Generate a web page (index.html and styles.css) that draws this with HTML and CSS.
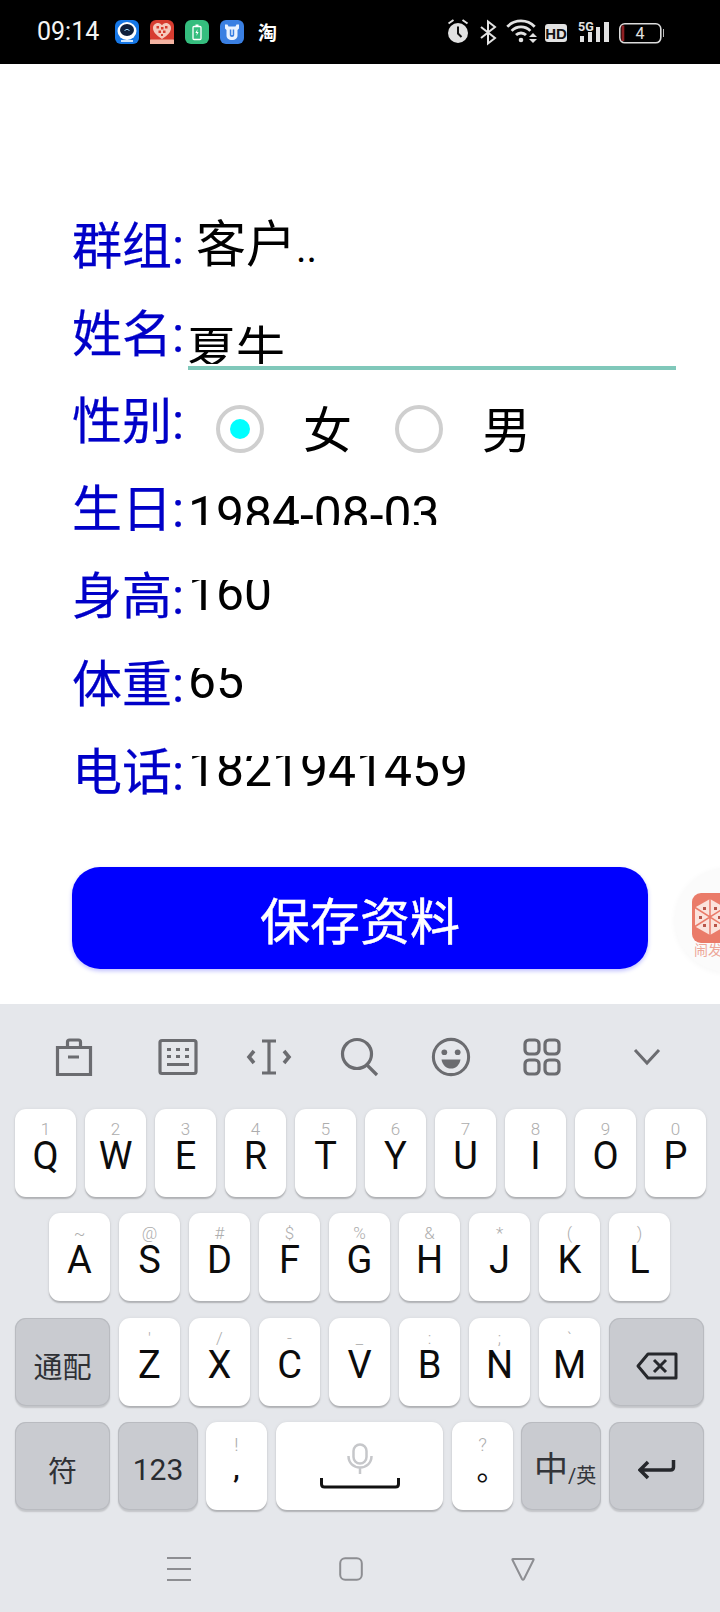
FILE: index.html
```html
<!DOCTYPE html>
<html lang="zh-CN">
<head>
<meta charset="utf-8">
<title>资料</title>
<link rel="stylesheet" href="styles.css">
</head>
<body>
<header class="status">
  <span class="time">09:14</span>
  <div class="apps">
    <svg class="app" viewBox="0 0 24 24"><rect width="24" height="24" rx="6" fill="#1677e6"/><ellipse cx="12" cy="11" rx="9.500" ry="9" fill="#fff"/><ellipse cx="12" cy="10" rx="7" ry="6" fill="#10203c"/><path d="M9.500 10.500q2.500-2.500 5 0" fill="none" stroke="#9fdcff" stroke-width="1"/><path d="M6 21h12" stroke="#cfe6ff" stroke-width="2"/></svg>
    <svg class="app" viewBox="0 0 24 24"><rect width="24" height="24" rx="6" fill="#d73c30"/><path d="M12 19C6 15 3 12 3 8 3 4.500 6 3 8 3c2 0 3.200 1 4 2.300C12.800 4 14 3 16 3c2 0 5 1.500 5 5 0 4-3 7-9 11z" fill="#f5c9bd"/><path d="M6.500 6h2.500v2.500H6.500zM11 7h2.500v2.500H11zM15 6h2.500v2.500H15zM8.500 10.500h2.500V13H8.500zM13 10.500h2.500V13H13zM11 14h2v2h-2z" fill="#d73c30"/><rect y="19.500" width="24" height="4.500" fill="#f4b3a2"/></svg>
    <svg class="app" viewBox="0 0 24 24"><rect width="24" height="24" rx="6" fill="#35bd7e"/><rect x="8" y="6.500" width="8" height="13" rx="1" fill="none" stroke="#fff" stroke-width="1.300"/><rect x="10.500" y="4.500" width="3" height="2" fill="#fff"/><path d="M12.600 9l-2.200 4h1.500l-.5 3 2.200-4h-1.500z" fill="#fff"/></svg>
    <svg class="app" viewBox="0 0 24 24"><rect width="24" height="24" rx="6" fill="#3a7fe2"/><path d="M5 4.500h2.500l1 2h7l1-2H19v4l-1.500 1.500v5.500c0 2.500-2 4.500-5.500 4.500s-5.500-2-5.500-4.500V10L5 8.500z" fill="#eaf2ff"/><path d="M9.800 9.500h1.500V15h1.400V9.500h1.500V15c0 1.200-.9 2-2.200 2s-2.200-.8-2.200-2z" fill="#3a7fe2"/></svg>
  </div>
  <span class="tao">淘</span>
  <svg class="sys" viewBox="0 0 216 30">
    <circle cx="10" cy="16" r="10" fill="#e2e2e2"/>
    <path d="M10 9.500v7l3.500 3.500" fill="none" stroke="#111" stroke-width="2"/>
    <path d="M0.500 6.500l5-3.500M19.500 6.500l-5-3.500" stroke="#e2e2e2" stroke-width="2"/>
    <path d="M33 10l14 11-7 5.500V4.500l7 5.500-14 11" fill="none" stroke="#e2e2e2" stroke-width="2"/>
    <path d="M68 18.100a7 7 0 0 1 10 0M63.600 13.900a13 13 0 0 1 18.800 0M59.300 9.700a19 19 0 0 1 27.400 0" fill="none" stroke="#e2e2e2" stroke-width="2.800"/>
    <circle cx="73" cy="23" r="2.300" fill="#e2e2e2"/>
    <path d="M81 20l4-4 4 4zM81 22l4 4 4-4z" fill="#e2e2e2"/>
    <rect x="97" y="7" width="22" height="18" rx="3" fill="#e2e2e2"/>
    <text x="108" y="21.500" class="sys-hd" text-anchor="middle">HD</text>
    <text x="130" y="13.500" class="sys-5g">5G</text>
    <path d="M132 19h4v6h-4zM140 15h4v10h-4zM148 10h4v15h-4zM156 5h5v20h-5z" fill="#e2e2e2"/>
    <rect x="171.800" y="6.800" width="41" height="19" rx="5" fill="none" stroke="#dcdcdc" stroke-width="1.600"/>
    <rect x="215" y="12" width="1.500" height="8" fill="#bbb"/>
    <rect x="173.500" y="8.500" width="2.800" height="15.500" fill="#8e1f22"/>
    <text x="192" y="21.500" class="sys-4" text-anchor="middle">4</text>
  </svg>
</header>

<main class="page">
  <form class="form">
    <div class="row">
      <span class="label">群组:</span>
      <span class="spinner">客户<span class="dots">..</span></span>
    </div>
    <div class="row">
      <span class="label">姓名:</span>
      <div class="field"><div class="field-clip">夏牛</div></div>
    </div>
    <div class="row">
      <span class="label">性别:</span>
      <div class="radios">
        <span class="radio radio-on"></span><span class="opt">女</span>
        <span class="radio radio-two"></span><span class="opt">男</span>
      </div>
    </div>
    <div class="row">
      <span class="label">生日:</span>
      <div class="num num-date">1984-08-03</div>
    </div>
    <div class="row">
      <span class="label">身高:</span>
      <div class="num num-height">160</div>
    </div>
    <div class="row">
      <span class="label">体重:</span>
      <div class="num num-weight">65</div>
    </div>
    <div class="row">
      <span class="label">电话:</span>
      <div class="num num-phone">1821941459</div>
    </div>
    <button class="save" type="button">保存资料</button>
  </form>
  <aside class="bubble">
    <svg class="bubble-icon" viewBox="0 0 36 50">
      <rect width="44" height="50" rx="9" fill="#ea7b69"/>
      <path d="M18 6l15 8.500v19L18 42 3 33.500v-19z" fill="#fbe3dc"/>
      <path d="M18 6v36M3 14.500l30 19M33 14.500l-30 19" stroke="#ea7b69" stroke-width="1.500"/>
      <path d="M11 14h3v3h-3zM22 14h3v3h-3zM7 23h3v3H7zM26 23h3v3h-3zM11 31h3v3h-3zM22 31h3v3h-3z" fill="#b9564a"/>
    </svg>
    <span class="bubble-text">闹发</span>
  </aside>
</main>

<section class="kb">
  <div class="tools">
    <svg class="tool tool-first" viewBox="0 0 40 40"><path d="M3.500 10.500h33v27h-33zM13.500 10.500V5q0-2 2-2h9q2 0 2 2v5.500M14 20h11" fill="none" stroke="#6b6c70" stroke-width="3.200"/></svg>
    <svg class="tool" viewBox="0 0 40 40"><rect x="2" y="3.500" width="36" height="33" rx="2" fill="none" stroke="#6b6c70" stroke-width="3.200"/><path d="M9 11h4v3H9zM18 11h4v3h-4zM27 11h4v3h-4zM9 18h4v3H9zM18 18h4v3h-4zM27 18h4v3h-4zM9 26h22v3H9z" fill="#6b6c70"/></svg>
    <svg class="tool tool-over" viewBox="0 0 40 40"><path d="M13 4h14M13 36h14M20 4v32" fill="none" stroke="#6b6c70" stroke-width="3.200"/><path d="M5 14L0 20l5 6M35 14l5 6-5 6" fill="none" stroke="#6b6c70" stroke-width="3.600"/></svg>
    <svg class="tool" viewBox="0 0 40 40"><circle cx="17" cy="17" r="14.500" fill="none" stroke="#6b6c70" stroke-width="3.200"/><path d="M27 28l10 10" stroke="#6b6c70" stroke-width="3.200"/></svg>
    <svg class="tool" viewBox="0 0 42 42"><circle cx="21" cy="21" r="18.500" fill="none" stroke="#6b6c70" stroke-width="3.200"/><circle cx="14" cy="16" r="3" fill="#6b6c70"/><circle cx="28" cy="16" r="3" fill="#6b6c70"/><path d="M11 23.500h20c-1 6-5 9.500-10 9.500s-9-3.500-10-9.500z" fill="#6b6c70"/></svg>
    <svg class="tool" viewBox="0 0 40 40"><g fill="none" stroke="#6b6c70" stroke-width="3.200"><rect x="3" y="3" width="14" height="14" rx="4"/><rect x="23" y="3" width="14" height="14" rx="4"/><rect x="3" y="23" width="14" height="14" rx="4"/><rect x="23" y="23" width="14" height="14" rx="4"/></g></svg>
    <svg class="tool tool-last" viewBox="0 0 40 40"><path d="M8 13l12 13 12-13" fill="none" stroke="#6b6c70" stroke-width="3"/></svg>
  </div>

  <div class="keys">
    <div class="krow krow-top">
      <div class="key"><small>1</small><b>Q</b></div>
      <div class="key"><small>2</small><b>W</b></div>
      <div class="key"><small>3</small><b>E</b></div>
      <div class="key"><small>4</small><b>R</b></div>
      <div class="key"><small>5</small><b>T</b></div>
      <div class="key"><small>6</small><b>Y</b></div>
      <div class="key"><small>7</small><b>U</b></div>
      <div class="key"><small>8</small><b>I</b></div>
      <div class="key"><small>9</small><b>O</b></div>
      <div class="key"><small>0</small><b>P</b></div>
    </div>
    <div class="krow krow-mid">
      <div class="key"><small>~</small><b>A</b></div>
      <div class="key"><small>@</small><b>S</b></div>
      <div class="key"><small>#</small><b>D</b></div>
      <div class="key"><small>$</small><b>F</b></div>
      <div class="key"><small>%</small><b>G</b></div>
      <div class="key"><small>&amp;</small><b>H</b></div>
      <div class="key"><small>*</small><b>J</b></div>
      <div class="key"><small>(</small><b>K</b></div>
      <div class="key"><small>)</small><b>L</b></div>
    </div>
    <div class="krow krow-top">
      <div class="key func func-text">通配</div>
      <div class="key"><small>'</small><b>Z</b></div>
      <div class="key"><small>/</small><b>X</b></div>
      <div class="key"><small>-</small><b>C</b></div>
      <div class="key"><small>_</small><b>V</b></div>
      <div class="key"><small>:</small><b>B</b></div>
      <div class="key"><small>;</small><b>N</b></div>
      <div class="key"><small>`</small><b>M</b></div>
      <div class="key func"><svg class="del" viewBox="0 0 42 28"><path d="M12 2h28v24H12L2 14z" fill="none" stroke="#26282c" stroke-width="3" stroke-linejoin="round"/><path d="M18 8l12 12M30 8L18 20" stroke="#26282c" stroke-width="3"/></svg></div>
    </div>
    <div class="krow krow-bottom">
      <div class="key func func-text">符</div>
      <div class="key func func-num">123</div>
      <div class="key"><small class="punct">!</small><b class="comma">,</b></div>
      <div class="key key-space">
        <svg class="space-icon" viewBox="0 0 80 46"><rect x="33.500" y="1.500" width="13" height="19" rx="6.500" fill="none" stroke="#c6c7ca" stroke-width="2.500"/><path d="M28.500 13c0 7 5 11.500 11.500 11.500S51.500 20 51.500 13M40 24.500V31" fill="none" stroke="#c6c7ca" stroke-width="2.500"/><path d="M1.500 35v6q0 3 3 3h71q3 0 3-3v-6" fill="none" stroke="#111" stroke-width="3"/></svg>
      </div>
      <div class="key key-period"><small class="punct">?</small><b class="period">。</b></div>
      <div class="key func func-lang"><span class="zh">中</span><span class="en">/英</span></div>
      <div class="key func key-enter"><svg class="enter" viewBox="0 0 38 22"><path d="M35.500 1v7q0 3-3 3H3M10 3l-8 8 8 8" fill="none" stroke="#26282c" stroke-width="3.500"/></svg></div>
    </div>
  </div>

  <nav class="nav">
    <svg class="nav-icon" viewBox="0 0 24 24"><path d="M0 1h24M0 12h24M0 23h24" stroke="#8d8e92" stroke-width="2"/></svg>
    <svg class="nav-icon" viewBox="0 0 24 24"><rect x="1.200" y="1.200" width="21.600" height="21.600" rx="5" fill="none" stroke="#8d8e92" stroke-width="2"/></svg>
    <svg class="nav-icon" viewBox="0 0 24 24"><path d="M2 2h20q1 0 .5 1L13 22q-1 1.500-2 0L1.500 3Q1 2 2 2z" fill="none" stroke="#8d8e92" stroke-width="2"/></svg>
  </nav>
</section>
</body>
</html>
```

FILE: styles.css
```css
* { box-sizing: border-box; }

html, body {
  margin: 0;
  padding: 0;
}

body {
  width: 720px;
  height: 1612px;
  overflow: hidden;
  background: #fff;
  font-family: Roboto, "Noto Sans CJK SC", sans-serif;
}

/* status bar */
.status {
  height: 64px;
  background: #000;
  display: flex;
  align-items: center;
  padding-left: 37px;
  color: #fff;
}
.time {
  width: 62px;
  font-size: 25px;
  line-height: 28px;
  color: #f4f4f4;
}
.apps {
  display: flex;
  gap: 11px;
  margin-left: 16px;
}
.app {
  display: block;
  width: 24px;
  height: 24px;
}
.tao {
  margin-left: 14px;
  width: 20px;
  font-size: 19px;
  line-height: 22px;
  font-weight: 700;
  font-family: "Noto Sans CJK SC", sans-serif;
}
.sys {
  display: block;
  width: 216px;
  height: 30px;
  margin-left: 170px;
}
.sys-hd {
  font: 700 15px "Liberation Sans", sans-serif;
  fill: #111;
}
.sys-5g {
  font: 700 12.5px Roboto, sans-serif;
  fill: #e2e2e2;
}
.sys-4 {
  font: 400 16px Roboto, sans-serif;
  fill: #e2e2e2;
}

/* form */
.page {
  position: relative;
  height: 940px;
  overflow: hidden;
  background: #fff;
}
.form {
  padding: 151px 0 0 72px;
}
.row {
  display: flex;
  height: 87.6px;
  align-items: flex-start;
}
.label {
  flex: none;
  width: 116px;
  margin-top: 2px;
  font-size: 50px;
  line-height: 60px;
  color: #0000c8;
  -webkit-text-stroke: 0.25px #0000c8;
  font-family: Roboto, "Noto Sans CJK SC", sans-serif;
}
.spinner {
  padding-left: 8px;
  font-size: 50px;
  line-height: 60px;
  color: #000;
}
.dots {
  font-size: 40px;
}
.field {
  width: 488px;
  margin-top: 17.4px;
  padding-bottom: 2px;
  border-bottom: 4px solid #80c8ba;
}
.field-clip {
  height: 44px;
  overflow: hidden;
  text-indent: -1px;
  font-size: 49px;
  line-height: 62px;
  color: #000;
}
.radios {
  display: flex;
  align-items: center;
  padding-left: 28px;
  margin-top: 9px;
}
.radio {
  flex: none;
  width: 48px;
  height: 48px;
  border: 4px solid #cfcfcf;
  border-radius: 50%;
  display: flex;
  align-items: center;
  justify-content: center;
}
.radio-on::after {
  content: "";
  width: 20px;
  height: 20px;
  border-radius: 50%;
  background: #00ffff;
}
.radio-two {
  margin-left: 43px;
}
.opt {
  flex: none;
  margin: 6px 0 0 39px;
  width: 49px;
  font-size: 49px;
  line-height: 54px;
  color: #000;
}
.num {
  overflow: hidden;
  font-size: 49.8px;
  color: #000;
}
.num-date {
  margin-top: 12.2px;
  height: 35px;
  line-height: 50px;
}
.num-height {
  margin-top: 14.6px;
  height: 50px;
  line-height: 26px;
}
.num-weight {
  margin-top: 15px;
  height: 50px;
  line-height: 26px;
}
.num-phone {
  margin-top: 15px;
  height: 50px;
  line-height: 27px;
}
.save {
  display: block;
  width: 576px;
  height: 102px;
  margin: 39px 0 0;
  padding: 0;
  border: 0;
  border-radius: 28px;
  background: #0000ff;
  color: #fff;
  font-family: Roboto, "Noto Sans CJK SC", sans-serif;
  font-size: 50px;
  -webkit-text-stroke: 0.5px #fff;
  box-shadow: 0 2px 4px rgba(0, 0, 255, 0.25);
}
.bubble {
  position: absolute;
  left: 675px;
  top: 804px;
  width: 104px;
  height: 104px;
  border-radius: 50%;
  background: #fbfbfb;
  box-shadow: 0 1px 6px rgba(0, 0, 0, 0.04);
}
.bubble-icon {
  position: absolute;
  left: 17px;
  top: 25px;
  width: 36px;
  height: 50px;
}
.bubble-text {
  position: absolute;
  left: 19px;
  top: 74px;
  font-size: 14px;
  line-height: 16px;
  color: #eda799;
  white-space: nowrap;
}

/* keyboard */
.kb {
  height: 608px;
  background: #e5e7eb;
}
.tools {
  height: 105px;
  display: flex;
  align-items: center;
  gap: 51px;
  padding-left: 54px;
}
.tool {
  flex: none;
  display: block;
  width: 40px;
  height: 40px;
}
.tool-over {
  overflow: visible;
}
.tool-first {
  margin-right: 13px;
}
.tool-last {
  margin-left: 14px;
}
.keys {
  display: flex;
  flex-direction: column;
  gap: 16.3px;
}
.krow {
  display: flex;
  gap: 9px;
  height: 88px;
}
.krow-top {
  padding-left: 15px;
}
.krow-mid {
  padding-left: 49px;
}
.krow-bottom {
  padding-left: 15px;
  gap: 8px;
}
.key {
  flex: none;
  width: 61px;
  height: 88px;
  border-radius: 11px;
  background: #fff;
  box-shadow: 0 1.5px 1.5px rgba(0, 0, 0, 0.22), 0 0 4px rgba(0, 0, 0, 0.05);
  display: flex;
  flex-direction: column;
  align-items: center;
}
.key small {
  margin-top: 11px;
  height: 18px;
  font-size: 17px;
  font-weight: 300;
  line-height: 18px;
  color: #adadad;
}
.key b {
  margin-top: -1px;
  font-size: 38px;
  font-weight: 400;
  line-height: 38px;
  color: #0c0c0c;
}
.key small.punct {
  margin-top: 14px;
  font-size: 19px;
}
.key b.comma {
  margin-top: -4px;
  font-size: 26px;
  font-weight: 700;
}
.key b.period {
  margin: -6px 0 0 18px;
  font-size: 30px;
  font-family: "Noto Sans CJK SC", sans-serif;
}
.func {
  width: 95px;
  background: #c9cbd0;
  box-shadow: inset 0 0 0 1px #b9bbc0, 0 1.5px 1.5px rgba(0, 0, 0, 0.15);
  justify-content: center;
}
.func-text {
  padding-top: 7px;
  font-size: 29px;
  color: #2f3135;
  font-family: "Noto Sans CJK SC", sans-serif;
}
.func-num {
  width: 80px;
  padding-top: 7px;
  font-size: 30px;
  color: #2a2c30;
}
.func-lang {
  width: 80px;
  flex-direction: row;
  align-items: flex-end;
  justify-content: flex-start;
  padding: 0 0 20px 13px;
  color: #33353a;
  font-family: Roboto, "Noto Sans CJK SC", sans-serif;
}
.zh {
  font-size: 34px;
  line-height: 42px;
}
.en {
  font-size: 20px;
  line-height: 28px;
}
.key-space {
  width: 167px;
  margin-left: 1px;
  padding-top: 21px;
}
.space-icon {
  display: block;
  width: 80px;
  height: 46px;
}
.key-period {
  margin-left: 1px;
}
.key-enter {
  margin-left: 0;
  align-items: center;
}
.del {
  display: block;
  width: 42px;
  height: 28px;
  margin-top: 8px;
}
.enter {
  display: block;
  width: 38px;
  height: 22px;
  margin-top: 8px;
}
.nav {
  display: flex;
  gap: 148px;
  padding: 47px 0 0 167px;
}
.nav-icon {
  display: block;
  flex: none;
  width: 24px;
  height: 24px;
}
```
